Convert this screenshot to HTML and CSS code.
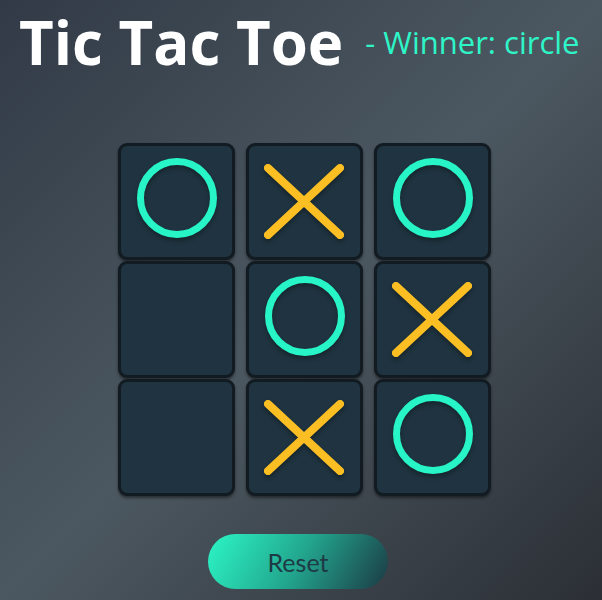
FILE: index.html
```html
<!DOCTYPE html>
<html>
<head>
<meta charset="utf-8">
<link rel="stylesheet" href="styles.css">
</head>
<body>
<header class="header">
  <h1 class="title">Tic Tac Toe</h1>
  <span class="winner">- Winner: circle</span>
</header>
<main class="board">
  <div class="cell"><svg class="mark o" viewBox="0 0 111 111"><circle cx="56" cy="52" r="36.5"/></svg></div>
  <div class="cell"><svg class="mark x" viewBox="0 0 111 111"><line x1="19" y1="22" x2="91" y2="89"/><line x1="91" y1="22" x2="19" y2="89"/></svg></div>
  <div class="cell"><svg class="mark o" viewBox="0 0 111 111"><circle cx="56" cy="52" r="36.5"/></svg></div>
  <div class="cell"></div>
  <div class="cell"><svg class="mark o" viewBox="0 0 111 111"><circle cx="56" cy="52" r="36.5"/></svg></div>
  <div class="cell"><svg class="mark x" viewBox="0 0 111 111"><line x1="19" y1="22" x2="91" y2="89"/><line x1="91" y1="22" x2="19" y2="89"/></svg></div>
  <div class="cell"></div>
  <div class="cell"><svg class="mark x" viewBox="0 0 111 111"><line x1="19" y1="22" x2="91" y2="89"/><line x1="91" y1="22" x2="19" y2="89"/></svg></div>
  <div class="cell"><svg class="mark o" viewBox="0 0 111 111"><circle cx="56" cy="52" r="36.5"/></svg></div>
</main>
<div class="actions">
  <button class="reset">Reset</button>
</div>
</body>
</html>
```
FILE: styles.css
```css
html, body {
  margin: 0;
  padding: 0;
  height: 600px;
  overflow: hidden;
}
body {
  background: linear-gradient(to bottom right, #313a46 0%, #4c5861 50%, #2b2f35 100%);
  font-family: "Open Sans", sans-serif;
}
.header {
  display: flex;
  align-items: center;
  padding: 1px 0 0 19px;
  height: 82px;
}
.title {
  margin: 0;
  font-size: 60px;
  font-weight: 700;
  line-height: 82px;
  color: #ffffff;
}
.winner {
  margin-left: 22px;
  font-size: 31px;
  line-height: 42px;
  color: #2ef5c8;
}
.board {
  display: grid;
  grid-template-columns: repeat(3, 117px);
  grid-auto-rows: 117px;
  column-gap: 11px;
  row-gap: 1px;
  margin: 60px 0 0 118px;
}
.cell {
  box-sizing: border-box;
  border: 3px solid #111b21;
  border-radius: 9px;
  background: #1f3440;
  box-shadow: 0 2px 3px rgba(0, 0, 0, 0.45);
}
.mark {
  display: block;
  width: 111px;
  height: 111px;
  fill: none;
  filter: drop-shadow(0 3px 2px rgba(0, 0, 0, 0.3));
}
.mark.o circle {
  stroke: #27f5c7;
  stroke-width: 7;
}
.mark.x line {
  stroke: #fbbf24;
  stroke-width: 8;
  stroke-linecap: round;
}
.actions {
  display: flex;
  padding-left: 208px;
  margin-top: 38px;
}
.reset {
  width: 180px;
  height: 55px;
  border: none;
  border-radius: 28px;
  background: linear-gradient(120deg, #2cf6c6 0%, #22a68e 50%, #1c3a44 100%);
  color: #1d3a45;
  font-family: Lato, sans-serif;
  font-size: 25px;
  padding: 0;
  cursor: pointer;
}
```
